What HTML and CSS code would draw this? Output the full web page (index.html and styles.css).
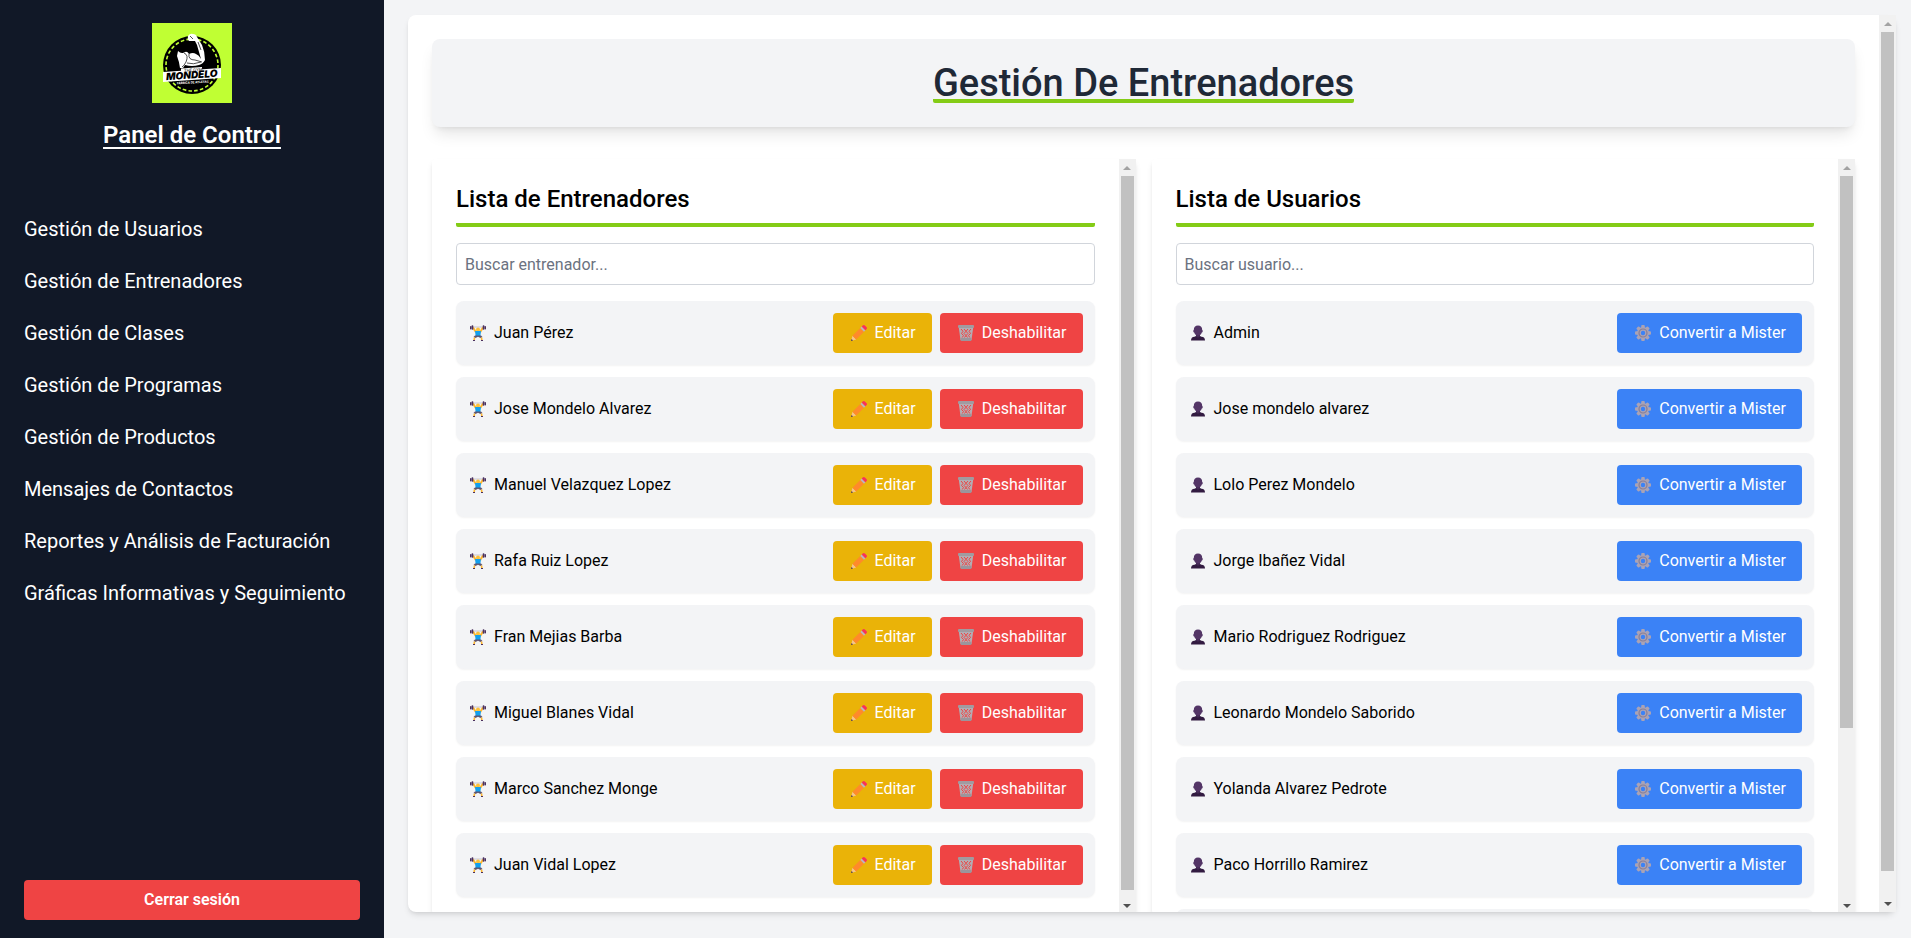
FILE: index.html
```
<!DOCTYPE html>
<html lang="es">
<head>
<meta charset="utf-8">
<title>Gestión De Entrenadores</title>
<link rel="stylesheet" href="styles.css">
</head>
<body>
<svg class="sprite" aria-hidden="true">
  <symbol id="lifter" viewBox="0 0 16 16">
    <path d="M1 2h14" stroke="#c9c6d2" stroke-width="1"/>
    <path d="M3 2.500 5.500 6.500h5L13 2.500" fill="none" stroke="#fdb62f" stroke-width="2"/>
    <circle cx="8" cy="4.500" r="2" fill="#fcc13a"/>
    <path d="M5 6h6l-.6 5H5.600z" fill="#13a0ee"/>
    <path d="M5 10.500h6l1.500 1.500-2 1L8 11.800 5.500 13l-2-1z" fill="#5d5470"/>
    <path d="M4.500 12.500 4.200 15M11.500 12.500l.3 2.500" stroke="#fdb62f" stroke-width="1.600"/>
    <path d="M3 15.500h2M11 15.500h2" stroke="#4b315e"/>
    <rect x="0" y="1" width="1.500" height="3.500" rx=".7" fill="#4b315e"/><rect x="1.600" y=".3" width="1.700" height="4.500" rx=".7" fill="#4b315e"/>
    <rect x="14.500" y="1" width="1.500" height="3.500" rx=".7" fill="#4b315e"/><rect x="12.700" y=".3" width="1.700" height="4.500" rx=".7" fill="#4b315e"/>
  </symbol>
  <symbol id="pencil" viewBox="0 0 16 16">
    <path d="M0 16 1.500 10.800 5.200 14.500z" fill="#f4c58b"/><path d="M0 16l.6-2 1.400 1.400z" fill="#3b2b45"/>
    <path d="M1.500 10.800 9.300 3l3.700 3.700-7.800 7.800z" fill="#ff8a2b"/>
    <path d="M9.300 3 10.700 1.600 14.400 5.300 13 6.700z" fill="#b9b2c3"/>
    <path d="M10.700 1.600 11.700.6q1.100-1 2.200 0L15.400 2.100q1.100 1.100 0 2.200l-1 1z" fill="#f8315b"/>
  </symbol>
  <symbol id="bin" viewBox="0 0 16 16">
    <path d="M.8 2.500h14.400L13.500 15h-11z" fill="#b3adb3"/>
    <path d="M3 4 5 6.300 3.500 8.500l2 2-1.300 2M6 4l2 2.300-2 2.200 2 2-1.500 2M10 4 8 6.300l2 2.200-2 2 1.500 2M13 4l-2 2.300 1.500 2.200-2 2 1.300 2" fill="none" stroke="#ef4444" stroke-width="1"/>
    <rect x="0" y="0" width="16" height="3" rx="1" fill="#a19ba0"/>
    <rect x="2.500" y="13" width="11" height="3" rx="1" fill="#9b959c"/>
  </symbol>
  <symbol id="person" viewBox="0 0 16 16">
    <path d="M1 15.500q0-3.500 3.500-3.800L6 11h4l1.500.7q3.500.3 3.500 3.800z" fill="#321b41"/>
    <path d="M6 8h4v3.500L8 12.800 6 11.500z" fill="#442a55"/>
    <path d="M3.800 5Q3.800.5 8 .5T12.200 5q.8.200.5 1.400-.2 1-.9 1-.8 3-3.800 3t-3.800-3q-.7 0-.9-1Q3 5.200 3.800 5z" fill="#533566"/>
  </symbol>
  <symbol id="gear" viewBox="0 0 16 16">
    <g fill="#aaa3b5"><circle cx="8" cy="8" r="6"/>
    <rect x="6.200" y="0" width="3.600" height="16" rx="1"/><rect x="6.200" y="0" width="3.600" height="16" rx="1" transform="rotate(45 8 8)"/>
    <rect x="6.200" y="0" width="3.600" height="16" rx="1" transform="rotate(90 8 8)"/><rect x="6.200" y="0" width="3.600" height="16" rx="1" transform="rotate(135 8 8)"/></g>
    <circle cx="8" cy="8" r="4" fill="none" stroke="#887f96" stroke-width="1.200"/>
    <circle cx="8" cy="8" r="2.200" fill="#3b82f6"/>
  </symbol>
</svg>

<div class="layout">
  <aside class="sidebar">
    <svg class="logo" viewBox="0 0 80 80" role="img" aria-label="Mondelo">
      <rect width="80" height="80" fill="#c0ff33"/>
      <circle cx="40" cy="42" r="29" fill="#000"/>
      <circle cx="40" cy="42" r="26" fill="none" stroke="#c0ff33" stroke-width="1.600" stroke-dasharray="3.600 2.200"/>
      <circle cx="40" cy="42" r="24" fill="#000"/>
      <path d="M26 28q3 3 6 1.500 3-2 5 1.500 4-2 7 0 3 1 5 5L45 22l-2-4-6 0q-2-2-1-5 2-3 5-2 3 0 4 3l5 8q3 7 3 15-2 4-6 5-7 2-14 0l-2 3h-3q-1-7-3-12z" fill="#fff"/>
      <path d="M32 30q5 2 2 9-2 4-4 5M37 31q-1 6 6 6l7 2M35 40q6 2 14-1M38 13l3 3M46 19l3 8" fill="none" stroke="#222" stroke-width=".8"/>
      <path d="M29 45.500 50 44v5l-21 1z" fill="#fff"/>
      <path d="M11 49 69 45v10L11 59z" fill="#fff"/>
      <text x="32" y="48.500" class="logo-small dark" transform="rotate(-2 40 48)">THE GYM</text>
      <text x="14" y="55.500" class="logo-name" transform="rotate(-4 40 54)">MONDELO</text>
      <text x="25" y="60.500" class="logo-small light" transform="rotate(-3 40 60)">FÁBRICA DE ATLETAS</text>
    </svg>
    <h2 class="panel-title">Panel de Control</h2>
    <nav class="menu">
      <a href="#">Gestión de Usuarios</a>
      <a href="#">Gestión de Entrenadores</a>
      <a href="#">Gestión de Clases</a>
      <a href="#">Gestión de Programas</a>
      <a href="#">Gestión de Productos</a>
      <a href="#">Mensajes de Contactos</a>
      <a href="#">Reportes y Análisis de Facturación</a>
      <a href="#">Gráficas Informativas y Seguimiento</a>
    </nav>
    <button class="logout" type="button">Cerrar sesión</button>
  </aside>

  <main class="main">
    <div class="card">
      <div class="card-body">
        <header class="page-header"><h1>Gestión De Entrenadores</h1></header>
        <div class="columns">
          <section class="pane">
            <div class="pane-body">
              <h2>Lista de Entrenadores</h2>
              <input class="search" type="text" placeholder="Buscar entrenador..." aria-label="Buscar entrenador">
              <ul class="list" id="trainers"></ul>
            </div>
            <div class="bar" aria-hidden="true"><i class="up"></i><div class="track"><div class="thumb" style="height:99%"></div></div><i class="down"></i></div>
          </section>
          <section class="pane">
            <div class="pane-body">
              <h2>Lista de Usuarios</h2>
              <input class="search" type="text" placeholder="Buscar usuario..." aria-label="Buscar usuario">
              <ul class="list" id="users"></ul>
            </div>
            <div class="bar" aria-hidden="true"><i class="up"></i><div class="track"><div class="thumb" style="height:76.500%"></div></div><i class="down"></i></div>
          </section>
        </div>
      </div>
      <div class="bar" aria-hidden="true"><i class="up"></i><div class="track"><div class="thumb" style="height:97.200%"></div></div><i class="down"></i></div>
    </div>
  </main>
</div>
<script src="app.js"></script>
</body>
</html>
```
FILE: styles.css
```
*, *::before, *::after { box-sizing: border-box; }
body, h1, h2, ul { margin: 0; padding: 0; }
body {
  font-family: Roboto, "Liberation Sans", sans-serif;
  font-size: 16px;
  line-height: 24px;
  color: #000;
  background: #f3f4f6;
}
button, input { font: inherit; }
.sprite { display: none; }

.layout { display: flex; height: 100vh; overflow: hidden; }

.sidebar {
  flex: 0 0 384px;
  display: flex;
  flex-direction: column;
  padding: 23px 24px 18px;
  background: #111827;
  color: #fff;
}
.logo { width: 80px; height: 80px; align-self: center; }
.logo-name { font: italic 900 10px Inter, sans-serif; fill: #000; }
.logo-small { font: 700 4px Inter, sans-serif; }
.logo-small.dark { fill: #555; }
.logo-small.light { font-size: 3px; fill: #fff; }
.panel-title {
  margin: 16px 0 52px;
  font-size: 24px;
  line-height: 32px;
  font-weight: 600;
  text-align: center;
  text-decoration: underline;
  text-decoration-thickness: 2px;
  text-underline-offset: 4px;
  text-decoration-skip-ink: none;
}
.menu { flex: 1; display: flex; flex-direction: column; }
.menu a {
  padding: 12px 0;
  font-size: 20px;
  line-height: 28px;
  color: #fff;
  text-decoration: none;
}
.logout {
  height: 40px;
  border: 0;
  border-radius: 4px;
  background: #ef4444;
  color: #fff;
  font-weight: 600;
}

.main { flex: 1; min-width: 0; display: flex; padding: 15px 15px 26px 24px; }
.card {
  flex: 1;
  min-width: 0;
  display: flex;
  background: #fff;
  border-radius: 8px;
  box-shadow: 0 4px 6px -1px rgba(0, 0, 0, .1), 0 2px 4px -2px rgba(0, 0, 0, .1);
}
.card-body {
  flex: 1;
  min-width: 0;
  padding: 24px 24px 0;
  overflow: hidden;
  border-radius: 8px 0 0 8px;
}
.page-header {
  margin-bottom: 32px;
  padding: 28px 24px 24px;
  text-align: center;
  background: #f3f4f6;
  border-radius: 8px;
  box-shadow: 0 10px 15px -3px rgba(0, 0, 0, .1), 0 4px 6px -4px rgba(0, 0, 0, .1);
}
.page-header h1 {
  display: inline-block;
  vertical-align: top;
  font-size: 38px;
  line-height: 32px;
  font-weight: 500;
  color: #1f2937;
  border-bottom: 4px solid #84cc16;
  border-radius: 2px;
}
.columns {
  display: grid;
  grid-template-columns: 1fr 1fr;
  gap: 16px;
  height: calc(100vh - 183px);
}
.pane {
  display: flex;
  min-width: 0;
  min-height: 0;
  background: #fff;
  border-radius: 4px;
  box-shadow: 0 4px 6px -1px rgba(0, 0, 0, .1), 0 2px 4px -2px rgba(0, 0, 0, .1);
}
.pane-body {
  flex: 1;
  min-width: 0;
  padding: 24px 24px 0;
  overflow-y: auto;
  scrollbar-width: none;
}
.pane h2 {
  margin-bottom: 16px;
  padding-bottom: 8px;
  font-size: 24px;
  line-height: 32px;
  font-weight: 500;
  border-bottom: 4px solid #84cc16;
  border-radius: 2px;
}
.search {
  display: block;
  width: 100%;
  height: 42px;
  margin-bottom: 16px;
  padding: 8px;
  border: 1px solid #d1d5db;
  border-radius: 4px;
  background: #fff;
}
.search::placeholder { color: #6b7280; opacity: 1; }

.list { display: grid; gap: 12px; list-style: none; }
.row {
  display: flex;
  align-items: center;
  gap: 8px;
  min-height: 64px;
  padding: 12px;
  background: #f3f4f6;
  border-radius: 8px;
  box-shadow: 0 1px 2px rgba(0, 0, 0, .05);
}
.name { flex: 1; display: flex; align-items: center; gap: 6px; }
.icon { width: 20px; height: 16px; flex: none; }
.btn {
  display: flex;
  align-items: center;
  gap: 6px;
  height: 40px;
  padding: 0 16px;
  border: 0;
  border-radius: 4px;
  color: #fff;
}
.edit { background: #eab308; }
.disable { background: #ef4444; }
.convert { background: #3b82f6; }

.bar {
  flex: 0 0 17px;
  display: flex;
  flex-direction: column;
  align-items: center;
  background: #f1f1f1;
}
.track { flex: 1; width: 13px; }
.thumb { background: #c1c1c1; }
.up, .down { display: flex; align-items: center; justify-content: center; height: 17px; }
.up::before, .down::before { content: ""; border: 4px solid transparent; }
.up::before { border-top: 0; border-bottom-color: #a3a3a3; }
.down::before { border-bottom: 0; border-top-color: #505050; }
```
FILE: app.js
```
const icon = id => `<svg class="icon" aria-hidden="true"><use href="#${id}"/></svg>`;

const trainers = ['Juan Pérez', 'Jose Mondelo Alvarez', 'Manuel Velazquez Lopez', 'Rafa Ruiz Lopez',
  'Fran Mejias Barba', 'Miguel Blanes Vidal', 'Marco Sanchez Monge', 'Juan Vidal Lopez'];
const users = ['Admin', 'Jose mondelo alvarez', 'Lolo Perez Mondelo', 'Jorge Ibañez Vidal',
  'Mario Rodriguez Rodriguez', 'Leonardo Mondelo Saborido', 'Yolanda Alvarez Pedrote', 'Paco Horrillo Ramirez'];

document.getElementById('trainers').innerHTML = trainers.map(n => `
  <li class="row"><span class="name">${icon('lifter')}${n}</span>
  <button type="button" class="btn edit">${icon('pencil')}Editar</button>
  <button type="button" class="btn disable">${icon('bin')}Deshabilitar</button></li>`).join('');

document.getElementById('users').innerHTML = users.map(n => `
  <li class="row"><span class="name">${icon('person')}${n}</span>
  <button type="button" class="btn convert">${icon('gear')}Convertir a Mister</button></li>`).join('')
  + '<li class="row"></li>';
```
